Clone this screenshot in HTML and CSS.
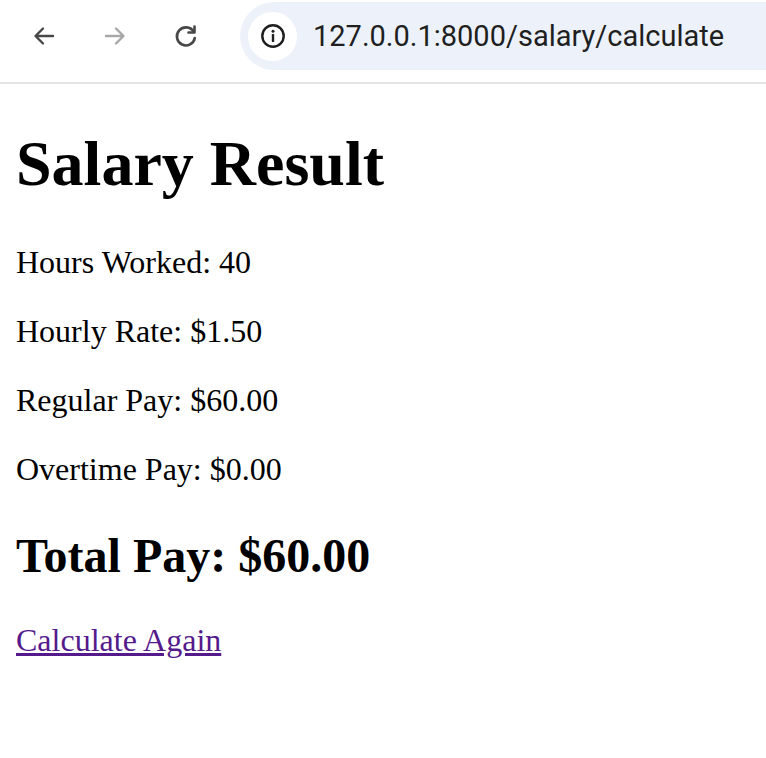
FILE: index.html
```html
<!DOCTYPE html>
<html lang="en">
<head>
<meta charset="utf-8">
<title>Salary Result</title>
<link rel="stylesheet" href="styles.css">
</head>
<body>
<header class="toolbar">
  <div class="nav-btn">
    <svg width="24" height="24" viewBox="0 0 24 24"><path d="M21 12H4M11 4.5L3.5 12L11 19.5" fill="none" stroke="#474747" stroke-width="2.4" stroke-linecap="round" stroke-linejoin="round"/></svg>
  </div>
  <div class="nav-btn">
    <svg width="24" height="24" viewBox="0 0 24 24"><path d="M3 12H20M13 4.5L20.5 12L13 19.5" fill="none" stroke="#a8a8a8" stroke-width="2.4" stroke-linecap="round" stroke-linejoin="round"/></svg>
  </div>
  <div class="nav-btn">
    <svg width="26" height="26" viewBox="0 0 26 26"><path d="M20.5 8.5A9 9 0 1 0 21.8 15" fill="none" stroke="#474747" stroke-width="2.6" stroke-linecap="round"/><path d="M21.5 3.5V9.5H15.5" fill="none" stroke="#474747" stroke-width="2.6" stroke-linecap="round" stroke-linejoin="round"/></svg>
  </div>
  <div class="omnibox">
    <div class="site-info">
      <svg width="26" height="26" viewBox="0 0 26 26"><circle cx="13" cy="13" r="10.7" fill="none" stroke="#1f1f1f" stroke-width="2.4"/><circle cx="13" cy="8.3" r="1.5" fill="#1f1f1f"/><rect x="11.8" y="11" width="2.4" height="8" rx="0.6" fill="#1f1f1f"/></svg>
    </div>
    <span class="url">127.0.0.1:8000/salary/calculate</span>
  </div>
</header>
<main class="page">
  <h1 class="title">Salary Result</h1>
  <p class="line">Hours Worked: 40</p>
  <p class="line">Hourly Rate: $1.50</p>
  <p class="line">Regular Pay: $60.00</p>
  <p class="line">Overtime Pay: $0.00</p>
  <h2 class="total">Total Pay: $60.00</h2>
  <p class="line"><a class="again" href="#">Calculate Again</a></p>
</main>
</body>
</html>
```
FILE: styles.css
```css
html, body {
  margin: 0;
  padding: 0;
  background: #ffffff;
}

.toolbar {
  display: flex;
  align-items: center;
  height: 82px;
  padding-left: 20px;
  border-bottom: 2px solid #e3e3e3;
  box-sizing: content-box;
  overflow: hidden;
}

.nav-btn {
  width: 48px;
  height: 48px;
  margin-right: 23px;
  display: flex;
  align-items: center;
  justify-content: center;
  margin-top: -10px;
}

.omnibox {
  flex: 1 0 auto;
  height: 68px;
  margin-left: 7px;
  margin-top: -10px;
  margin-right: -40px;
  border-radius: 34px;
  background: #edf2fa;
  display: flex;
  align-items: center;
  padding-left: 8px;
}

.site-info {
  width: 49px;
  height: 49px;
  border-radius: 50%;
  background: #ffffff;
  display: flex;
  align-items: center;
  justify-content: center;
}

.url {
  margin-left: 16px;
  font-family: Roboto, "Liberation Sans", sans-serif;
  font-size: 29px;
  color: #1f1f1f;
}

.page {
  padding: 0 16px;
  font-family: "Liberation Serif", "Times New Roman", serif;
  color: #000000;
}

.title {
  font-size: 64px;
  font-weight: bold;
  margin: 42.88px 0;
}

.line {
  font-size: 32px;
  margin: 32px 0;
}

.total {
  font-size: 48px;
  font-weight: bold;
  margin: 39.84px 0;
}

.again {
  color: #551a8b;
  text-decoration: underline;
}
```
